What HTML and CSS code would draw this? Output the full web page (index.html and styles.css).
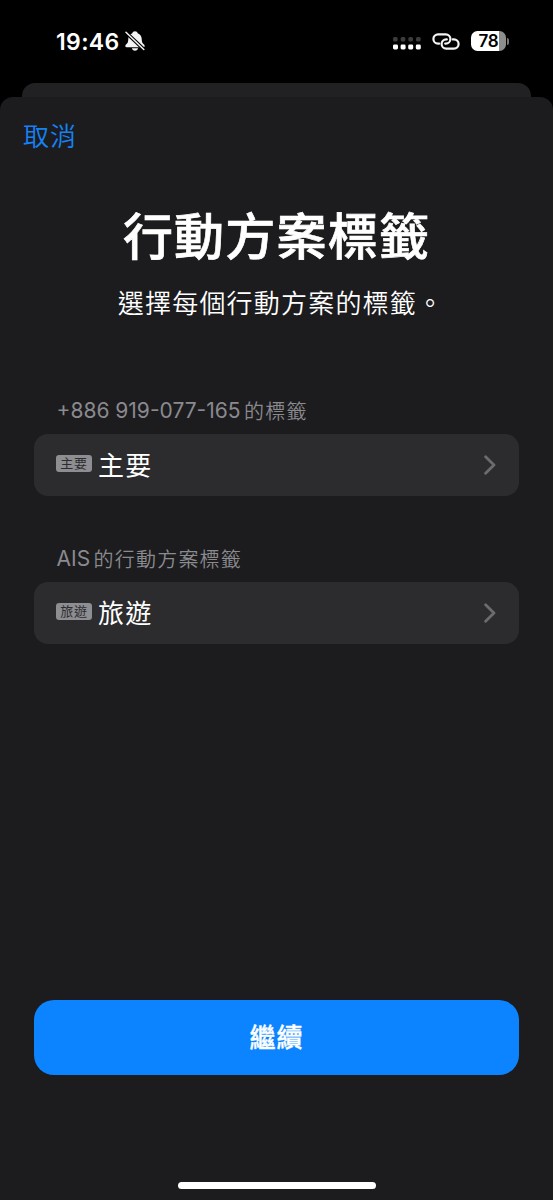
FILE: index.html
```html
<!DOCTYPE html>
<html lang="zh-Hant">
<head>
<meta charset="utf-8">
<title>行動方案標籤</title>
<link rel="stylesheet" href="styles.css">
</head>
<body>
<div class="phone">
  <header class="status">
    <div class="status-left">
      <span class="time">19:46</span>
      <svg class="bell" viewBox="0 0 20 20" width="20" height="20">
        <path fill="#f4f4f4" d="M10 .3c-1.400 0-2.400.9-2.700 2C4.700 3.200 3.400 5.300 3.300 8c-.1 3.200-.6 4.100-2.300 5.500-1 .9-1 2.700.7 2.700h16.600c1.700 0 1.700-1.800.7-2.700-1.700-1.400-2.200-2.300-2.300-5.500-.1-2.700-1.400-4.800-4-5.700C12.400 1.200 11.400.3 10 .3zM6.900 17.200h6.200c-.3 1.600-1.500 2.500-3.100 2.500s-2.800-.9-3.100-2.500z"/>
        <path stroke="#000" stroke-width="3.600" d="M0 .5l20 19"/>
        <path stroke="#f4f4f4" stroke-width="1.500" stroke-linecap="round" d="M1 1.200l17.800 17.300"/>
      </svg>
    </div>
    <div class="status-right">
      <svg width="28" height="13" viewBox="0 0 28 13">
        <g fill="#3c3c3c"><rect x="0" y="0" width="4.600" height="4.600" rx="1.500"/><rect x="7.700" y="0" width="4.600" height="4.600" rx="1.500"/><rect x="15.400" y="0" width="4.600" height="4.600" rx="1.500"/><rect x="23" y="0" width="4.600" height="4.600" rx="1.500"/></g>
        <g fill="#fff"><rect x="0" y="7.500" width="5" height="5" rx="1.400"/><rect x="7.600" y="7.500" width="5" height="5" rx="1.400"/><rect x="15.200" y="7.500" width="5" height="5" rx="1.400"/><rect x="22.800" y="7.500" width="5" height="5" rx="1.400"/></g>
      </svg>
      <svg class="link" width="28" height="17" viewBox="0 0 28 17" fill="none" stroke="#f4f4f4" stroke-width="2.200" stroke-linecap="round">
        <path d="M7.200 10.600H6a4.600 4.600 0 0 1 0-9.200h7.800a4.600 4.600 0 0 1 0 9.200h-.6"/>
        <path d="M20.800 6.400h1.200a4.600 4.600 0 0 1 0 9.200h-7.800a4.600 4.600 0 0 1 0-9.200h.6"/>
      </svg>
      <div class="battery"><span class="level">78</span></div>
      <span class="battery-tip"></span>
    </div>
  </header>
  <div class="sheet-back"></div>
  <main class="sheet">
    <nav class="cancel">取消</nav>
    <h1 class="title">行動方案標籤</h1>
    <p class="subtitle">選擇每個行動方案的標籤。</p>
    <section class="group">
      <h2 class="label"><span class="latin">+886 919-077-165</span>的標籤</h2>
      <div class="row">
        <span class="badge">主要</span><span class="name">主要</span>
        <svg class="chevron" width="12" height="20" viewBox="0 0 12 20"><path d="M1.600 1.800L10 10l-8.400 8.200"/></svg>
      </div>
    </section>
    <section class="group">
      <h2 class="label"><span class="latin">AIS</span>的行動方案標籤</h2>
      <div class="row">
        <span class="badge">旅遊</span><span class="name">旅遊</span>
        <svg class="chevron" width="12" height="20" viewBox="0 0 12 20"><path d="M1.600 1.800L10 10l-8.400 8.200"/></svg>
      </div>
    </section>
    <footer class="footer">
      <div class="continue">繼續</div>
      <div class="home-bar"></div>
    </footer>
  </main>
</div>
</body>
</html>
```

FILE: styles.css
```css
* { box-sizing: border-box; }
body {
  margin: 0;
  background: #000;
  color: #fff;
  font-family: "Noto Sans CJK TC", sans-serif;
}
.phone {
  width: 553px;
  height: 1200px;
  display: flex;
  flex-direction: column;
  overflow: hidden;
}
.status {
  height: 83px;
  flex: none;
  display: flex;
  justify-content: space-between;
  padding: 0 44px 0 56px;
  font-family: Inter, sans-serif;
}
.status-left, .status-right { display: flex; align-items: center; height: 82px; }
.time { padding-top: 2px; font-size: 23px; font-weight: 600; letter-spacing: 0.350px; width: 69px; }
.status-right svg:first-child { margin-top: 5px; }
.link { margin-left: 11px; }
.battery {
  width: 35px;
  height: 20px;
  margin-left: 11px;
  border-radius: 6.500px;
  background: linear-gradient(90deg, #fff 0 28px, #8d8d8d 28px);
  color: #000;
  text-align: center;
}
.level { display: block; font-size: 17px; font-weight: 600; line-height: 20px; letter-spacing: -0.300px; }
.battery-tip { width: 2px; height: 7px; margin-left: 1px; border-radius: 0 2px 2px 0; background: #777; }
.sheet-back { flex: none; height: 14px; margin: 0 22px; border-radius: 13px 13px 0 0; background: #212123; }
.sheet {
  flex: 1;
  display: flex;
  flex-direction: column;
  padding: 0 34px;
  background: #1c1c1e;
  border-radius: 13px 13px 0 0;
}
.cancel { margin: 18px 0 0 -11px; font-size: 26px; font-weight: 350; line-height: 40px; letter-spacing: 1px; color: #1482f5; }
.title { margin: 43px 0 0; text-align: center; font-size: 50px; line-height: 70px; font-weight: 500; -webkit-text-stroke: 0.700px #fff; letter-spacing: 1.200px; }
.subtitle { margin: 14px 0 0 9px; text-align: center; font-size: 26px; font-weight: 350; line-height: 40px; letter-spacing: 1.200px; white-space: nowrap; }
.group { margin-top: 48px; }
.subtitle + .group { margin-top: 74px; }
.label { display: flex; margin: 0; padding-left: 22.500px; font-size: 20px; line-height: 30px; height: 38px; font-weight: 350; letter-spacing: 1.200px; color: #8a8a8f; }
.latin { font-family: Inter, sans-serif; font-size: 21px; font-weight: 400; letter-spacing: 0; margin-right: 3.500px; }
.row { display: flex; align-items: center; height: 62px; padding: 0 23px 0 22px; border-radius: 14px; background: #2c2c2e; }
.badge {
  width: 36px;
  height: 17px;
  margin-bottom: 3px;
  border-radius: 3px;
  background: #8d8d92;
  color: #2c2c2e;
  font-size: 13px;
  line-height: 16px;
  letter-spacing: 0.700px;
  text-align: center;
}
.name { margin: -2px 0 0 6px; font-size: 26px; line-height: 40px; letter-spacing: 1.200px; }
.chevron { margin-left: auto; fill: none; stroke: #6b6b70; stroke-width: 2.800; stroke-linecap: round; stroke-linejoin: round; }
.footer { margin-top: auto; display: flex; flex-direction: column; align-items: center; }
.continue {
  width: 100%;
  height: 75px;
  border-radius: 20px;
  background: #0d84ff;
  text-align: center;
  font-size: 26px;
  line-height: 72px;
  font-weight: 500;
  -webkit-text-stroke: 0.400px #fff;
  letter-spacing: 1px;
}
.home-bar { width: 198px; height: 7px; margin: 107px 0 11px; border-radius: 4px; background: #fff; }
```
